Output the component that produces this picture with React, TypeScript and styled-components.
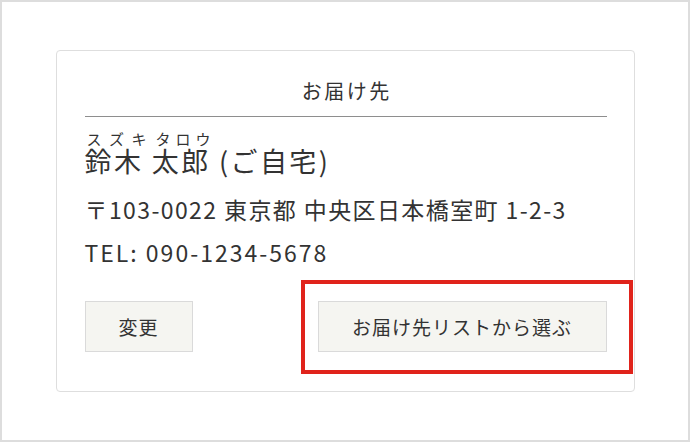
import { createGlobalStyle, styled } from "styled-components";

const GlobalStyle = createGlobalStyle`
  html, body {
    margin: 0;
    padding: 0;
    background: #ffffff;
  }
  body {
    font-family: "Noto Sans CJK JP", "Noto Sans", sans-serif;
    color: #333333;
  }
`;

interface Reading {
  kana: string;
  width: number;
}

const readings: Reading[] = [
  { kana: "スズキ", width: 60 },
  { kana: "タロウ", width: 55 },
];

const App = () => {
  return (
    <>
      <GlobalStyle />
      <StyledPage>
        <StyledCard>
          <StyledTitle>お届け先</StyledTitle>
          <StyledKanaRow>
            {readings.map((r) => (
              <StyledKanaGroup key={r.kana} $width={r.width}>
                {r.kana.split("").map((c, i) => (
                  <span key={i}>{c}</span>
                ))}
              </StyledKanaGroup>
            ))}
          </StyledKanaRow>
          <StyledName>鈴木 太郎 (ご自宅)</StyledName>
          <StyledAddress>〒103-0022 東京都 中央区日本橋室町 1-2-3</StyledAddress>
          <StyledPhone>TEL: 090-1234-5678</StyledPhone>
          <StyledButtons>
            <StyledButton $width={108}>変更</StyledButton>
            <StyledHighlight>
              <StyledButton $width={289}>お届け先リストから選ぶ</StyledButton>
              <StyledMarker />
            </StyledHighlight>
          </StyledButtons>
        </StyledCard>
      </StyledPage>
    </>
  );
};

export default App;

const StyledPage = styled.div`
  box-sizing: border-box;
  width: 690px;
  height: 442px;
  border: 2px solid #dddddd;
  display: flex;
  align-items: center;
  justify-content: center;
`;

const StyledCard = styled.div`
  box-sizing: border-box;
  width: 579px;
  height: 342px;
  border: 1px solid #dedede;
  border-radius: 4px;
  padding: 25px 27px 0 28px;
  display: flex;
  flex-direction: column;
`;

const StyledTitle = styled.div`
  font-size: 20px;
  line-height: 30px;
  letter-spacing: 2.5px;
  text-indent: 2.5px;
  text-align: center;
  padding-bottom: 10px;
  border-bottom: 1px solid #8e8e8e;
`;

const StyledKanaRow = styled.div`
  display: flex;
  gap: 9px;
  margin-top: 14px;
  padding-left: 2px;
`;

const StyledKanaGroup = styled.div<{ $width: number }>`
  display: flex;
  justify-content: space-between;
  width: ${(p) => p.$width}px;
  font-size: 15px;
  line-height: 16px;
`;

const StyledName = styled.div`
  font-size: 27px;
  line-height: 28px;
  letter-spacing: 2.4px;
  white-space: pre;
`;

const StyledAddress = styled.div`
  font-size: 23px;
  line-height: 40px;
  letter-spacing: 1.4px;
  margin-top: 14px;
`;

const StyledPhone = styled.div`
  font-size: 23px;
  line-height: 40px;
  letter-spacing: 2px;
  margin-top: 3px;
`;

const StyledButtons = styled.div`
  display: flex;
  justify-content: space-between;
  align-items: center;
  margin-top: 29px;
`;

const StyledHighlight = styled.div`
  position: relative;
`;

const StyledButton = styled.button<{ $width: number }>`
  box-sizing: border-box;
  width: ${(p) => p.$width}px;
  height: 51px;
  background: #f5f5f1;
  border: 1px solid #dadada;
  border-radius: 0;
  font-family: "Noto Sans CJK JP", sans-serif;
  font-size: 19px;
  letter-spacing: 1px;
  color: #333333;
  padding: 0;
  display: block;
`;

const StyledMarker = styled.div`
  position: absolute;
  top: -21px;
  left: -17px;
  right: -26px;
  bottom: -22px;
  border: 4px solid #e0231b;
  pointer-events: none;
`;
